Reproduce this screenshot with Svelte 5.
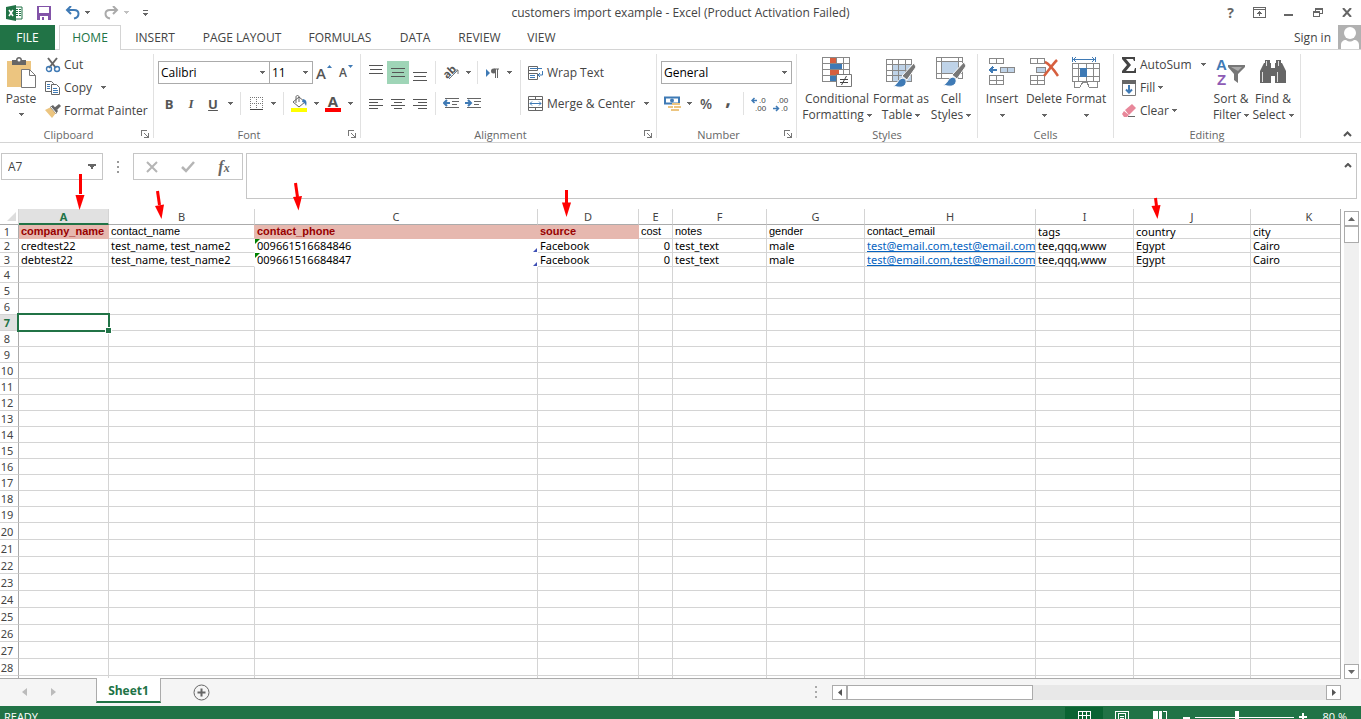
<script>
  const tabs = [
    { name: 'INSERT', width: 68 },
    { name: 'PAGE LAYOUT', width: 106 },
    { name: 'FORMULAS', width: 90 },
    { name: 'DATA', width: 60 },
    { name: 'REVIEW', width: 69 },
    { name: 'VIEW', width: 55 }
  ];

  const columns = [
    { name: 'A', width: 90 },
    { name: 'B', width: 146 },
    { name: 'C', width: 283 },
    { name: 'D', width: 101 },
    { name: 'E', width: 34 },
    { name: 'F', width: 94 },
    { name: 'G', width: 98 },
    { name: 'H', width: 171 },
    { name: 'I', width: 98 },
    { name: 'J', width: 117 },
    { name: 'K', width: 117 }
  ];

  const header = ['company_name', 'contact_name', 'contact_phone', 'source', 'cost', 'notes', 'gender', 'contact_email', 'tags', 'country', 'city'];
  const required = ['A', 'C', 'D'];
  const mails = 'test@email.com,test@email.com';

  const records = [
    ['credtest22', 'test_name, test_name2', '009661516684846', 'Facebook', '0', 'test_text', 'male', mails, 'tee,qqq,www', 'Egypt', 'Cairo'],
    ['debtest22', 'test_name, test_name2', '009661516684847', 'Facebook', '0', 'test_text', 'male', mails, 'tee,qqq,www', 'Egypt', 'Cairo']
  ];

  // rows 4 to 28 are empty
  const emptyRows = Array.from({ length: 25 }, (_, i) => i + 4);

  let selectedRow = $state(7);
  let zoom = $state(80);
</script>

{#snippet caret()}
  <svg class="caret" width="5" height="3" viewBox="0 0 5 3" shape-rendering="crispEdges"><path d="M0 0h5v1H4v1H3v1H2V2H1V1H0z" fill="#666" /></svg>
{/snippet}

{#snippet launcher(name)}
  <button class="launcher" aria-label="{name} settings">
    <svg width="8" height="8" viewBox="0 0 8 8" fill="none" stroke="#777" shape-rendering="crispEdges"><path d="M.5 6V.5H6M3 3l4 4M7.5 3v4.5H3" /></svg>
  </button>
{/snippet}

{#snippet lines(rows, y)}
  <svg width="14" height="16" viewBox="0 0 14 16" fill="none" stroke="#555" shape-rendering="crispEdges">
    {#each rows as [from, to], i}
      <path d="M{from} {y + i * 4 - (rows.length > 3 ? i : 0)}.5H{to}" />
    {/each}
  </svg>
{/snippet}

<div class="window">
  <header class="titlebar">
    <div class="quick">
      <svg width="17" height="16" viewBox="0 0 17 16">
        <path d="M9 2h7v12H9z" fill="#fff" stroke="#217346" />
        <path d="M10 4.5h2m1 0h2m-5 2h2m1 0h2m-5 2h2m1 0h2m-5 2h2m1 0h2" stroke="#217346" />
        <path d="M0 2l10-2v16L0 14z" fill="#217346" />
        <path d="M3 5l4 6M7 5l-4 6" stroke="#fff" stroke-width="1.6" />
      </svg>
      <button aria-label="Save">
        <svg width="14" height="14" viewBox="0 0 14 14" shape-rendering="crispEdges"><path d="M0 0h14v14H0z" fill="#8253a8" /><path d="M2 1h10v6H2zM3 10h8v4H3z" fill="#fff" /><path d="M5 11h2v3H5z" fill="#8253a8" /></svg>
      </button>
      <button class="undo" aria-label="Undo">
        <svg width="15" height="14" viewBox="0 0 15 14" fill="none" stroke="#3f7ab5" stroke-width="2"><path d="M2 4h7c6 0 6 7 0 8.500M6 0L2 4l4 4" /></svg>
        {@render caret()}
      </button>
      <button class="undo redo" aria-label="Redo">
        <svg width="15" height="14" viewBox="0 0 15 14" fill="none" stroke="#aaa" stroke-width="2"><path d="M13 4H6c-6 0-6 7 0 8.500M9 0l4 4-4 4" /></svg>
        {@render caret()}
      </button>
      <button aria-label="Customize Quick Access Toolbar">
        <svg width="5" height="6" viewBox="0 0 5 6" shape-rendering="crispEdges"><path d="M0 0h5v1H0zM0 3h5v1H4v1H3v1H2V5H1V4H0z" fill="#666" /></svg>
      </button>
    </div>
    <h1>customers import example - Excel (Product Activation Failed)</h1>
    <div class="controls">
      <button class="help" aria-label="Help">?</button>
      <button aria-label="Ribbon display options"><svg width="13" height="11" viewBox="0 0 13 11" fill="none" stroke="#666" shape-rendering="crispEdges"><path d="M.5.500h12v10H.5zM0 2.500h13M6.500 9V4M4 6.500h5M5 5.500h3" /></svg></button>
      <button aria-label="Minimize"><svg width="9" height="11" viewBox="0 0 9 11"><path d="M0 7h9v2H0z" fill="#666" /></svg></button>
      <button aria-label="Restore"><svg width="10" height="9" viewBox="0 0 10 9" fill="none" stroke="#666" shape-rendering="crispEdges"><path d="M2.500 3V.5h7v5H7M3 1.500h7M.5 3.500h6v5h-6zM0 4.500h7" /></svg></button>
      <button aria-label="Close"><svg width="10" height="9" viewBox="0 0 10 9" stroke="#666" stroke-width="2"><path d="M1 0l8 9M9 0L1 9" /></svg></button>
    </div>
  </header>

  <nav class="tabs">
    <button class="file">FILE</button>
    <button class="home">HOME</button>
    {#each tabs as tab}
      <button style:width="{tab.width}px">{tab.name}</button>
    {/each}
    <a class="signin" href="#signin">Sign in</a>
    <svg class="avatar" width="23" height="24" viewBox="0 0 23 24"><path d="M0 0h23v24H0z" fill="#b1b1b1" /><circle cx="12" cy="8" r="6" fill="#fff" /><path d="M3 24v-4c0-3 2-5 5-5 3 2 5 2 8 0 3 0 5 2 5 5v4z" fill="#fff" /></svg>
  </nav>

  <section class="ribbon">
    <div class="group clipboard">
      <div class="body">
        <button class="big paste">
          <svg width="30" height="31" viewBox="0 0 30 31"><path d="M1 4h24v26H1z" fill="#ecc580" /><path d="M6 3h4c0-4 6-4 6 0h4v5H6z" fill="#666" /><circle cx="13" cy="3" r="1.500" fill="#fff" /><path d="M15.500 12.500h8l6 6v12h-14z" fill="#fff" stroke="#777" /><path d="M23.500 12.500v6h6" fill="none" stroke="#777" /></svg>
          <span>Paste</span>
          {@render caret()}
        </button>
        <div class="stack">
          <button><svg width="16" height="16" viewBox="0 0 16 16" fill="none"><path d="M3 1l8 10M12 1L4 11" stroke="#666" stroke-width="2" /><circle cx="4" cy="12" r="2.500" stroke="#3f7ab5" stroke-width="1.400" /><circle cx="12" cy="12" r="2.500" stroke="#3f7ab5" stroke-width="1.400" /></svg>Cut</button>
          <button><svg width="16" height="16" viewBox="0 0 16 16" fill="#fff" stroke="#666"><path d="M.5 1.500h6l2 2v8h-8z" /><path d="M2 4.500h3m-3 2h3m-3 2h3" stroke="#3f7ab5" /><path d="M6.500 4.500h5l3 3v7h-8z" /><path d="M8 8.500h4m-4 2h5m-5 2h5" stroke="#3f7ab5" /></svg>Copy<i>{@render caret()}</i></button>
          <button><svg width="16" height="16" viewBox="0 0 16 16"><path d="M0 7l6-3 5 6-4 5z" fill="#ecc580" /><path d="M5 4l3-2 5 6-2 3z" fill="#666" /><path d="M9 5l5-4 2 2-4 4z" fill="#666" /><path d="M6 4l5 6" stroke="#fff" /></svg>Format Painter</button>
        </div>
      </div>
      <div class="caption"><span>Clipboard</span>{@render launcher('Clipboard')}</div>
    </div>

    <div class="group font">
      <div class="body rows">
        <div class="row">
          <span class="combo family"><select aria-label="Font"><option>Calibri</option></select>{@render caret()}</span>
          <span class="combo size"><select aria-label="Font size"><option>11</option></select>{@render caret()}</span>
          <button class="tool grow" aria-label="Increase font size">A<svg width="5" height="3" viewBox="0 0 5 3"><path d="M2.500 0L5 3H0z" fill="#3f7ab5" /></svg></button>
          <button class="tool grow shrink" aria-label="Decrease font size">A<svg width="5" height="3" viewBox="0 0 5 3"><path d="M0 0h5L2.500 3z" fill="#3f7ab5" /></svg></button>
        </div>
        <div class="row">
          <button class="tool"><b>B</b></button>
          <button class="tool italic"><b>I</b></button>
          <button class="tool underline"><b>U</b></button>
          <button class="drop" aria-label="Underline style">{@render caret()}</button>
          <span class="split"></span>
          <button class="tool" aria-label="Borders"><svg width="13" height="13" viewBox="0 0 13 13" stroke="#777" shape-rendering="crispEdges"><path d="M0 .5h13M0 6.500h13M.5 0v12M6.500 0v12M12.500 0v12" stroke-dasharray="1 1" /><path d="M0 12.500h13" stroke="#444" /></svg></button>
          <button class="drop" aria-label="Border style">{@render caret()}</button>
          <span class="split"></span>
          <button class="tool" aria-label="Fill color"><svg width="17" height="17" viewBox="0 0 17 17"><path d="M2 7l6-5 6 5-6 5z" fill="#fff" stroke="#666" /><path d="M5 8V2c0-2 3-2 3 0v5" fill="none" stroke="#666" /><path d="M12 4c4 1 4 4 3 7-1-2-2-4-4-4z" fill="#3f7ab5" /><path d="M0 13h16v4H0z" fill="#ff0" /></svg></button>
          <button class="drop" aria-label="Fill color list">{@render caret()}</button>
          <button class="tool fontcolor" aria-label="Font color"><b>A</b></button>
          <button class="drop" aria-label="Font color list">{@render caret()}</button>
        </div>
      </div>
      <div class="caption"><span>Font</span>{@render launcher('Font')}</div>
    </div>

    <div class="group alignment">
      <div class="body">
        <div class="rows">
          <div class="row">
            <button class="tool" aria-label="Top align">{@render lines([[0, 14], [1, 13], [0, 14]], 0)}</button>
            <button class="tool on" aria-label="Middle align">{@render lines([[0, 14], [1, 13], [0, 14]], 3)}</button>
            <button class="tool" aria-label="Bottom align">{@render lines([[0, 14], [1, 13], [0, 14]], 7)}</button>
            <span class="split"></span>
            <button class="tool orient" aria-label="Orientation"><svg width="18" height="17" viewBox="0 0 18 17"><text x="1" y="13" transform="rotate(-45 6 9)" font-size="11" font-weight="bold" fill="#555">ab</text><path d="M7 15l9-9M12 6h4v4" fill="none" stroke="#777" /></svg></button>
            <button class="drop" aria-label="Orientation list">{@render caret()}</button>
            <span class="split narrow"></span>
            <button class="tool" aria-label="Text direction"><svg width="13" height="10" viewBox="0 0 13 10"><path d="M0 1l4 4-4 4z" fill="#3f7ab5" /><path d="M8 1h5M9.500 1v9M11.500 1v9" stroke="#666" /><circle cx="7.500" cy="3" r="2.500" fill="#666" /></svg></button>
            <button class="drop" aria-label="Text direction list">{@render caret()}</button>
          </div>
          <div class="row">
            <button class="tool" aria-label="Align left">{@render lines([[0, 14], [0, 9], [0, 14], [0, 9]], 3)}</button>
            <button class="tool" aria-label="Center">{@render lines([[0, 14], [3, 11], [0, 14], [3, 11]], 3)}</button>
            <button class="tool" aria-label="Align right">{@render lines([[0, 14], [5, 14], [0, 14], [5, 14]], 3)}</button>
            <span class="split"></span>
            <button class="tool" aria-label="Decrease indent"><svg width="16" height="11" viewBox="0 0 16 11" fill="none"><path d="M2 .5h14M9 3.500h7M9 6.500h5M2 9.500h14" stroke="#666" shape-rendering="crispEdges" /><path d="M1 5h6M4 2L1 5l3 3" stroke="#3f7ab5" stroke-width="2" /></svg></button>
            <button class="tool" aria-label="Increase indent"><svg width="16" height="11" viewBox="0 0 16 11" fill="none"><path d="M2 .5h14M9 3.500h7M9 6.500h5M2 9.500h14" stroke="#666" shape-rendering="crispEdges" /><path d="M0 5h6M3 2l3 3-3 3" stroke="#3f7ab5" stroke-width="2" /></svg></button>
          </div>
        </div>
        <span class="split tall"></span>
        <div class="rows wrap">
          <button><svg width="16" height="16" viewBox="0 0 16 16" fill="none" stroke="#666"><path d="M.5 1.500h9v4h-9zM.5 8.500h9v6h-9zM.5 5v4" /><path d="M2 3.500h12M2 10.500h5M2 12.500h5M14.500 6v4h-5M12 8l-2 2 2 2" stroke="#3f7ab5" /></svg>Wrap Text</button>
          <button><svg width="16" height="16" viewBox="0 0 16 16" fill="none" stroke="#666"><path d="M.5.500h14v14H.5zM.5 3.500h14M.5 11.500h14M7.500 0v4M7.500 11v4" /><path d="M2 7.500h11M4 5.500l-2 2 2 2M11 5.500l2 2-2 2" stroke="#3f7ab5" /></svg>Merge &amp; Center<i>{@render caret()}</i></button>
        </div>
      </div>
      <div class="caption"><span>Alignment</span>{@render launcher('Alignment')}</div>
    </div>

    <div class="group number">
      <div class="body rows">
        <div class="row"><span class="combo format"><select aria-label="Number format"><option>General</option></select>{@render caret()}</span></div>
        <div class="row">
          <button class="tool" aria-label="Accounting format"><svg width="17" height="16" viewBox="0 0 17 16"><path d="M1 1.500h14v6H1z" fill="#fff" stroke="#3f7ab5" stroke-width="2" /><circle cx="8" cy="4.500" r="2" fill="#3f7ab5" /><path d="M8 7h8v2H8zM10 10h7v2h-7zM7 13h8v2H7zM4 10h5v2H4z" fill="#ecc580" /></svg></button>
          <button class="drop" aria-label="Currency list">{@render caret()}</button>
          <button class="tool percent">%</button>
          <button class="tool comma">,</button>
          <span class="split"></span>
          <button class="tool decimal" aria-label="Increase decimal"><svg width="16" height="16" viewBox="0 0 16 16"><path d="M1 4.500h5M3.500 2L1 4.500 3.500 7" fill="none" stroke="#3f7ab5" stroke-width="1.500" /><text x="8" y="7">.0</text><text x="4" y="15">.00</text></svg></button>
          <button class="tool decimal" aria-label="Decrease decimal"><svg width="16" height="16" viewBox="0 0 16 16"><path d="M0 12.500h5M3 10l2.500 2.500L3 15" fill="none" stroke="#3f7ab5" stroke-width="1.500" /><text x="4" y="7">.00</text><text x="8" y="15">.0</text></svg></button>
        </div>
      </div>
      <div class="caption"><span>Number</span>{@render launcher('Number')}</div>
    </div>

    <div class="group styles">
      <div class="body">
        <button class="big w68">
          <svg width="30" height="31" viewBox="0 0 30 31"><g fill="none" stroke="#888" shape-rendering="crispEdges"><path d="M.5.500h27v24H.5zM0 6.500h28M0 12.500h28M0 18.500h28M8.500 0v25M14.500 0v25M21.500 0v25" /></g><path d="M8 1h6v5H8zM8 13h9v5H8z" fill="#d65f3f" /><path d="M8 7h12v5H8zM8 19h6v5H8z" fill="#3f7ab5" /><path d="M14.500 17.500h15v12h-15z" fill="#fff" stroke="#777" /><path d="M18 22.500h8M18 25.500h8M24.500 19l-5 9" stroke="#444" /></svg>
          <span>Conditional</span><span>Formatting {@render caret()}</span>
        </button>
        <button class="big w60">
          <svg width="30" height="31" viewBox="0 0 30 31"><path d="M7 8h19v17H7z" fill="#bfd3e8" /><path d="M.5 2.500h25v22H.5zM0 7.500h26M0 13.500h26M0 18.500h26M6.500 2v23M12.500 2v23M19.500 2v23" fill="none" stroke="#888" shape-rendering="crispEdges" /><path d="M28 6l2 4-9 13-5-4z" fill="#777" stroke="#fff" /><path d="M7 29c5-1 4-7 10-8 4 1 4 6 1 8-3 2-7 1-11 0z" fill="#3f7ab5" stroke="#fff" /></svg>
          <span>Format as</span><span>Table {@render caret()}</span>
        </button>
        <button class="big w40">
          <svg width="30" height="31" viewBox="0 0 30 31"><path d="M6 5h17v11H6z" fill="#bfd3e8" /><path d="M.5.500h26v21H.5zM0 4.500h27M0 16.500h27M5.500 0v22M22.500 0v22" fill="none" stroke="#888" shape-rendering="crispEdges" /><path d="M28 5l2 4-9 13-5-4z" fill="#777" stroke="#fff" /><path d="M7 28c5-1 4-7 10-8 4 1 4 6 1 8-3 2-7 1-11 0z" fill="#3f7ab5" stroke="#fff" /></svg>
          <span>Cell</span><span>Styles {@render caret()}</span>
        </button>
      </div>
      <div class="caption"><span>Styles</span></div>
    </div>

    <div class="group cells">
      <div class="body">
        <button class="big w42">
          <svg width="28" height="31" viewBox="0 0 28 31" shape-rendering="crispEdges"><path d="M1.500 1.500h14v5h-14zM8.500 1v6M1.500 18.500h14v9h-14zM8.500 18v10M1 23.500h15" fill="none" stroke="#888" /><path d="M12.500 10.500h14v5h-14zM19.500 10v6" fill="#bfd3e8" stroke="#888" /><path d="M3 13h6M5 10l-3 3 3 3" fill="none" stroke="#3f7ab5" stroke-width="2" /></svg>
          <span>Insert</span><span>{@render caret()}</span>
        </button>
        <button class="big w42">
          <svg width="30" height="31" viewBox="0 0 30 31"><g shape-rendering="crispEdges"><path d="M1.500 1.500h14v5h-14zM8.500 1v6M1.500 18.500h14v9h-14zM8.500 18v10M1 23.500h15" fill="none" stroke="#888" /><path d="M7.500 10.500h9v5h-9z" fill="#bfd3e8" stroke="#888" /></g><path d="M16 5c5 2 9 8 13 14M28 3c-4 4-9 11-13 16" fill="none" stroke="#d65f3f" stroke-width="2.500" /></svg>
          <span>Delete</span><span>{@render caret()}</span>
        </button>
        <button class="big w42">
          <svg width="28" height="31" viewBox="0 0 28 31" shape-rendering="crispEdges"><path d="M.5 6.500h27v18H.5zM0 11.500h28M0 19.500h28M6.500 6v19M14.500 6v19M21.500 6v19M2 25v5h6l3-5h4l2 5h8v-5" fill="none" stroke="#888" /><path d="M8 11h7v9H8z" fill="#3f7ab5" /><path d="M.5 0v5M23.500 0v5M1 2.500h22M4 0L1.500 2.500 4 5M20 0l2.500 2.500L20 5" fill="none" stroke="#3f7ab5" /></svg>
          <span>Format</span><span>{@render caret()}</span>
        </button>
      </div>
      <div class="caption"><span>Cells</span></div>
    </div>

    <div class="group editing">
      <div class="body">
        <div class="stack">
          <button><svg width="16" height="16" viewBox="0 0 16 16"><path d="M1 0h13v4h-1l-1-2H5l5 6-5 6h8l1-3h1v5H1v-2l5-6-5-6z" fill="#444" /></svg>AutoSum<i>{@render caret()}</i></button>
          <button><svg width="16" height="16" viewBox="0 0 16 16"><path d="M1.500.500h13v15h-13z" fill="#fff" stroke="#777" /><path d="M1 0h14v4H1z" fill="#666" /><path d="M8 5v8M5 9.500l3 3 3-3" fill="none" stroke="#3f7ab5" stroke-width="2" /></svg>Fill{@render caret()}</button>
          <button><svg width="16" height="16" viewBox="0 0 16 16"><path d="M4 7l7-6 4 4-7 7z" fill="#e8879a" /><path d="M3 8l5 4-2 2H3l-2-3z" fill="#e8879a" /><path d="M7 13.500h7" stroke="#666" /></svg>Clear{@render caret()}</button>
        </div>
        <button class="big w42 sort">
          <svg width="30" height="31" viewBox="0 0 30 31"><text x="0" y="13" fill="#3f7ab5">A</text><text x="1" y="28" fill="#8e5bb5">Z</text><path d="M12 8h17v2l-7 7v9l-4-3v-6l-6-7z" fill="#777" /><path d="M15 10h11l-4 4z" fill="#aaa" /></svg>
          <span>Sort &amp;</span><span>Filter {@render caret()}</span>
        </button>
        <button class="big w42">
          <svg width="28" height="31" viewBox="0 0 28 31"><path d="M6 3h5v3h1v20H1V14l4-8h1zM17 3h5v3h1l4 8v12H16V6h1zM11 11h6v8h-6z" fill="#666" /><path d="M3.500 15v10M18.500 15v10M7.500 4v5M19.500 4v5" stroke="#ddd" /></svg>
          <span>Find &amp;</span><span>Select {@render caret()}</span>
        </button>
      </div>
      <div class="caption"><span>Editing</span></div>
    </div>
    <button class="collapse" aria-label="Collapse the ribbon"><svg width="9" height="6" viewBox="0 0 9 6"><path d="M1 5l3.500-3.500L8 5" fill="none" stroke="#555" stroke-width="2" /></svg></button>
  </section>

  <section class="formula">
    <label class="namebox"><input value="A7" aria-label="Name box" />{@render caret()}</label>
    <svg width="2" height="12" viewBox="0 0 2 12" shape-rendering="crispEdges"><path d="M0 0h2v2H0zM0 5h2v2H0zM0 10h2v2H0z" fill="#999" /></svg>
    <div class="entry">
      <button aria-label="Cancel"><svg width="12" height="12" viewBox="0 0 12 12" stroke="#b5b5b5" stroke-width="2"><path d="M1 1l10 10M11 1L1 11" /></svg></button>
      <button aria-label="Enter"><svg width="14" height="12" viewBox="0 0 14 12"><path d="M1 6l4 4 8-9" fill="none" stroke="#b5b5b5" stroke-width="2.500" /></svg></button>
      <button class="fx" aria-label="Insert function">f<small>x</small></button>
    </div>
    <div class="bar">
      <textarea aria-label="Formula bar"></textarea>
      <svg width="8" height="5" viewBox="0 0 8 5"><path d="M1 4l3-3 3 3" fill="none" stroke="#555" stroke-width="2" /></svg>
    </div>
  </section>

  <main class="workspace">
    <div class="sheet">
      <table>
        <colgroup>
          <col style:width="19px" />
          {#each columns as column}<col style:width="{column.width}px" />{/each}
        </colgroup>
        <thead>
          <tr>
            <th class="corner"><svg width="9" height="9" viewBox="0 0 9 9"><path d="M9 0v9H0z" fill="#ddd" /></svg></th>
            {#each columns as column}<th class:active={column.name === 'A'}>{column.name}</th>{/each}
          </tr>
        </thead>
        <tbody>
          <tr class="data titles">
            <th>1</th>
            {#each header as title, i}
              <td class:required={required.includes(columns[i].name)} class:before={i === 1} class:plain={i > 7}><div>{title}</div></td>
            {/each}
          </tr>
          {#each records as record, n}
            <tr class="data">
              <th>{n + 2}</th>
              {#each record as value, i}
                <td class:phone={i === 2} class:noline={i === 1} class:num={i === 4}>
                  <div>{#if i === 7}<a href="mailto:{value}">{value}</a>{:else}{value}{/if}</div>
                </td>
              {/each}
            </tr>
          {/each}
          {#each emptyRows as row}
            <tr class:tall={row > 19}>
              <th class:active={row === selectedRow}>{row}</th>
              {#each columns as column, i}
                <td onclick={() => (selectedRow = row)}>{#if row === selectedRow && i === 0}<span class="selection"></span>{/if}</td>
              {/each}
            </tr>
          {/each}
          <tr class="rest"><th></th>{#each columns as column}<td></td>{/each}</tr>
        </tbody>
      </table>
    </div>
    <div class="vscroll">
      <button aria-label="Scroll up"><svg width="7" height="4" viewBox="0 0 7 4"><path d="M0 4l3.500-4L7 4z" fill="#666" /></svg></button>
      <span class="thumb"></span>
      <span class="track"></span>
      <button aria-label="Scroll down"><svg width="7" height="4" viewBox="0 0 7 4"><path d="M0 0h7L3.500 4z" fill="#666" /></svg></button>
    </div>
  </main>

  <footer class="sheets">
    <div class="step">
      <button aria-label="Previous sheet"><svg width="5" height="8" viewBox="0 0 5 8"><path d="M5 0v8L0 4z" fill="#bbb" /></svg></button>
      <button aria-label="Next sheet"><svg width="5" height="8" viewBox="0 0 5 8"><path d="M0 0v8l5-4z" fill="#bbb" /></svg></button>
    </div>
    <button class="sheettab">Sheet1</button>
    <button class="add" aria-label="New sheet"><svg width="17" height="17" viewBox="0 0 17 17" fill="none" stroke="#666"><circle cx="8.500" cy="8.500" r="7.500" /><path d="M8.500 4.500v8M4.500 8.500h8" stroke-width="2" /></svg></button>
    <svg class="grip" width="2" height="12" viewBox="0 0 2 12"><path d="M0 0h2v2H0zM0 5h2v2H0zM0 10h2v2H0z" fill="#aaa" /></svg>
    <div class="hscroll">
      <button aria-label="Scroll left"><svg width="4" height="7" viewBox="0 0 4 7"><path d="M4 0v7L0 3.500z" fill="#555" /></svg></button>
      <span class="thumb"></span>
      <span class="track"></span>
      <button aria-label="Scroll right"><svg width="4" height="7" viewBox="0 0 4 7"><path d="M0 0v7l4-3.500z" fill="#555" /></svg></button>
    </div>
  </footer>

  <footer class="status">
    <span class="ready">READY</span>
    <button class="view on" aria-label="Normal view"><svg width="13" height="13" viewBox="0 0 13 13" fill="none" stroke="#fff" shape-rendering="crispEdges"><path d="M.5.500h12v12H.5zM0 4.500h13M0 8.500h13M4.500 0v13M8.500 0v13" /></svg></button>
    <button class="view" aria-label="Page layout view"><svg width="14" height="13" viewBox="0 0 14 13" fill="none" stroke="#fff" shape-rendering="crispEdges"><path d="M.5.500h13v12H.5zM3.500 13V2.500h7V13M5 5.500h4M5 7.500h4M5 9.500h4" /></svg></button>
    <button class="view" aria-label="Page break preview"><svg width="14" height="13" viewBox="0 0 14 13" fill="#fff" shape-rendering="crispEdges"><path d="M0 0h5v9H0zM6 0h3v9H6zM10 0h4v13h-1V1h-3zM0 11h9v2H0z" /></svg></button>
    <div class="zoom">
      <button aria-label="Zoom out"><svg width="7" height="7" viewBox="0 0 7 7"><path d="M0 3h7v2H0z" fill="#fff" /></svg></button>
      <input type="range" min="10" max="180" aria-label="Zoom" bind:value={zoom} />
      <button aria-label="Zoom in"><svg width="8" height="8" viewBox="0 0 8 8"><path d="M3 0h2v3h3v2H5v3H3V5H0V3h3z" fill="#fff" /></svg></button>
      <output>{zoom} %</output>
    </div>
  </footer>

  <!-- red pointers to the columns that get imported -->
  <svg class="pointers" width="1200" height="230" viewBox="0 0 1200 230" fill="#f00" stroke="#f00">
    <path d="M80.500 174v20" stroke-width="3" /><path d="M75.500 195h9L79.500 210z" stroke="none" />
    <path d="M157.500 191l2 14" stroke-width="3" /><path d="M155 206l9-1.500-2.500 14.500z" stroke="none" />
    <path d="M295.500 183l2 14" stroke-width="3" /><path d="M293 197l9-1-3.500 14.500z" stroke="none" />
    <path d="M566.500 190v14" stroke-width="3" /><path d="M562 202.500h9L566.500 217z" stroke="none" />
    <path d="M1155.500 198l1 8" stroke-width="3" /><path d="M1151.500 206l9-1-3 14z" stroke="none" />
  </svg>
</div>

<style>
  :global(body){
    overflow: hidden;
  }

  .window{
    position: relative;
    min-height: 100vh;
    display: flex;
    flex-direction: column;
    background: white;
    color: #444;
    font-family: "Open Sans", "Noto Sans", sans-serif;
    font-size: 12px;
    line-height: 16px;
  }

  button{
    display: flex;
    align-items: center;
    justify-content: center;
    padding: 0;
    border: 0;
    background: none;
    color: inherit;
    font: inherit;
    white-space: nowrap;
  }

  svg{
    flex: none;
    display: block;
  }

  input, select, textarea{
    box-sizing: border-box;
    margin: 0;
    border: 0;
    background: none;
    color: inherit;
    font: inherit;
    outline: none;
    appearance: none;
  }

  .titlebar{
    display: grid;
    grid-template-columns: 1fr auto 1fr;
    align-items: center;
    height: 25px;
  }

  .quick{
    display: flex;
    align-items: center;
    gap: 14px;
    padding-left: 6px;
    height: 22px;
  }

  .undo{
    gap: 5px;
  }

  .redo .caret{
    opacity: .4;
  }

  h1{
    margin: 0;
    font-size: 12px;
    font-weight: normal;
  }

  .controls{
    display: flex;
    justify-content: flex-end;
  }

  .controls button{
    width: 29px;
    height: 22px;
  }

  .controls .help{
    font-size: 14px;
    font-weight: bold;
    color: #666;
  }

  .tabs{
    display: flex;
    height: 24px;
    border-bottom: 1px solid #d4d4d4;
  }

  .tabs button{
    height: 25px;
  }

  .tabs .file{
    width: 55px;
    margin-right: 4px;
    background: #217346;
    color: white;
  }

  .tabs .home{
    box-sizing: border-box;
    width: 62px;
    border: 1px solid #d4d4d4;
    border-bottom: 0;
    background: white;
    color: #217346;
  }

  .signin{
    margin-left: auto;
    padding-right: 7px;
    line-height: 25px;
    color: inherit;
    text-decoration: none;
  }

  .ribbon{
    display: flex;
    height: 92px;
    border-bottom: 1px solid #d4d4d4;
  }

  .group{
    display: flex;
    flex-direction: column;
    box-sizing: border-box;
    margin: 4px 0;
    border-right: 1px solid #e1e1e1;
  }

  .body{
    display: flex;
    box-sizing: border-box;
    height: 72px;
  }

  .caption{
    display: flex;
    height: 16px;
    color: #666;
    text-align: center;
    font-size: 11px;
  }

  .caption span{
    flex: 1;
    padding-top: 1px;
    line-height: 15px;
  }

  .group .body{
    flex: none;
  }

  .caption{
    margin-top: auto;
    margin-bottom: -4px;
  }

  .launcher{
    width: 16px;
  }

  .clipboard{ width: 154px; }
  .font{ width: 207px; }
  .alignment{ width: 296px; }
  .number{ width: 140px; }
  .styles{ width: 181px; }
  .cells{ width: 136px; }
  .editing{ width: 187px; }

  .big{
    flex-direction: column;
    justify-content: flex-start;
    padding-top: 3px;
  }

  .big span{
    display: flex;
    align-items: center;
    gap: 3px;
    height: 16px;
  }

  .big > svg:first-child{
    margin-bottom: 3px;
  }

  .paste{
    width: 42px;
  }

  .paste .caret{
    margin-top: 6px;
  }

  .w68{ width: 68px; }
  .w60{ width: 60px; }
  .w40{ width: 40px; }
  .w42{ width: 42px; }

  .styles .body{
    padding-left: 6px;
  }

  .cells .body{
    padding-left: 3px;
  }

  .stack{
    display: flex;
    flex-direction: column;
    margin-top: -1px;
    padding-left: 3px;
  }

  .stack button, .wrap button{
    justify-content: flex-start;
    gap: 3px;
    height: 23px;
  }

  .stack i, .wrap i{
    padding-left: 6px;
  }

  .editing .stack{
    width: 89px;
    padding-left: 7px;
  }

  .sort text{
    font: bold 15px "Liberation Sans", sans-serif;
  }

  .orient svg{
    overflow: visible;
  }

  .decimal text{
    fill: #444;
    font: 8px "Liberation Sans", sans-serif;
  }

  .rows{
    display: flex;
    flex-direction: column;
    gap: 8px;
    padding-top: 7px;
  }

  .body.rows{
    padding-left: 4px;
  }

  .alignment .body{
    padding-left: 4px;
  }

  .row{
    display: flex;
    height: 23px;
  }

  .tool{
    width: 22px;
    color: #555;
  }

  .tool b{
    font-size: 13px;
  }

  .italic{
    font-style: italic;
    font-family: "Liberation Serif", serif;
  }

  .underline{
    text-decoration: underline;
  }

  .on{
    background: #9fd5b7;
  }

  .drop{
    width: 12px;
  }

  .split{
    width: 1px;
    margin: 0 4px;
    background: #e1e1e1;
  }

  .split.narrow{
    margin: 0 3px;
  }

  .split.tall{
    height: 55px;
    margin: 6px 7px 0 5px;
  }

  .combo{
    position: relative;
    box-sizing: border-box;
    border: 1px solid #ababab;
    color: black;
  }

  .combo select{
    width: 100%;
    height: 100%;
    padding: 0 2px;
  }

  .combo .caret{
    position: absolute;
    right: 4px;
    top: 9px;
  }

  .family{ width: 112px; }
  .size{ width: 44px; margin-left: -1px; }
  .format{ width: 131px; }

  .grow{
    gap: 1px;
    font-size: 15px;
    font-weight: 600;
  }

  .grow svg{
    margin-bottom: 12px;
  }

  .shrink{
    font-size: 12px;
  }

  .fontcolor b{
    width: 16px;
    line-height: 13px;
    border-bottom: 4px solid red;
    font-size: 15px;
  }

  .percent{
    font-size: 14px;
    font-weight: 600;
  }

  .comma{
    font-size: 20px;
    font-weight: bold;
    padding-bottom: 12px;
  }

  .collapse{
    width: 28px;
    height: 16px;
    margin: 76px 0 0 auto;
  }

  .formula{
    display: flex;
    align-items: flex-start;
    padding: 10px 4px 10px 1px;
  }

  .namebox, .entry, .bar{
    box-sizing: border-box;
    border: 1px solid #c6c6c6;
  }

  .namebox{
    display: flex;
    align-items: center;
    width: 102px;
    height: 27px;
    padding-right: 6px;
  }

  .namebox input{
    flex: 1;
    min-width: 0;
    padding-left: 6px;
  }

  .namebox .caret{
    width: 8px;
    height: 5px;
  }

  .formula > svg{
    margin: 8px 14px 0;
  }

  .entry{
    display: flex;
    width: 110px;
    height: 27px;
    margin-right: 3px;
  }

  .entry button{
    flex: 1;
  }

  .entry .fx{
    font: italic bold 16px "Liberation Serif", serif;
    color: #666;
  }

  .fx small{
    padding-top: 4px;
    font-size: 12px;
  }

  .bar{
    display: flex;
    flex: 1;
    height: 46px;
  }

  .bar textarea{
    flex: 1;
    resize: none;
  }

  .bar svg{
    margin: 9px 4px;
  }

  .workspace{
    display: flex;
  }

  .sheet{
    flex: 1;
    min-width: 0;
    overflow: hidden;
    border-right: 1px solid #ababab;
    border-bottom: 1px solid #ababab;
  }

  table{
    width: 1368px;
    table-layout: fixed;
    border-collapse: separate;
    border-spacing: 0;
    font-family: "Noto Sans", "Open Sans", sans-serif;
    font-size: 11px;
    line-height: 13px;
  }

  th, td{
    position: relative;
    box-sizing: border-box;
    height: 16px;
    padding: 0;
    border-right: 1px solid #d4d4d4;
    border-bottom: 1px solid #d4d4d4;
    color: black;
  }

  th{
    font-weight: normal;
    color: #444;
  }

  thead th{
    border-bottom-color: #ababab;
  }

  tbody th{
    padding-right: 4px;
    border-right-color: #ababab;
    text-align: center;
  }

  .corner svg{
    margin-left: 7px;
  }

  th.active{
    background: #e1e1e1;
    color: #217346;
    font-weight: bold;
  }

  thead th.active{
    border-bottom: 2px solid #217346;
  }

  .data th, .data td{
    height: 14px;
  }

  td div{
    overflow-x: clip;
    padding: 0 2px;
    white-space: nowrap;
  }

  .titles td{
    font-family: "Liberation Sans", sans-serif;
  }

  .titles .plain{
    font-family: inherit;
  }

  .titles .required{
    border-color: #e6b8af;
    background: #e6b8af;
    color: #980000;
    font-weight: bold;
  }

  .titles .before{
    border-right-color: #e6b8af;
  }

  .noline{
    border-right-color: white;
  }

  .phone{
    border-color: white;
  }

  .phone::before, .phone::after{
    content: "";
    position: absolute;
    border: solid transparent;
  }

  .phone::before{
    top: 0;
    left: 0;
    border-width: 5px 5px 0 0;
    border-top-color: green;
  }

  .phone::after{
    right: 0;
    bottom: 0;
    border-width: 0 0 4px 4px;
    border-bottom-color: #3f51b5;
  }

  .num{
    text-align: right;
  }

  td a{
    color: #0563c1;
  }

  .tall th, .tall td{
    height: 17px;
  }

  .rest th, .rest td{
    height: 2px;
    border-bottom: 0;
  }

  .selection{
    position: absolute;
    inset: -2px;
    z-index: 1;
    border: 2px solid #217346;
  }

  .selection::after{
    content: "";
    position: absolute;
    right: -4px;
    bottom: -4px;
    width: 5px;
    height: 5px;
    border: 1px solid white;
    background: #217346;
  }

  .vscroll{
    display: flex;
    flex-direction: column;
    width: 15px;
    margin: 2px 2px 0 3px;
  }

  .vscroll button, .hscroll button, .thumb{
    box-sizing: border-box;
    border: 1px solid #ababab;
    background: white;
  }

  .vscroll button{
    height: 15px;
  }

  .vscroll .thumb{
    height: 17px;
  }

  .track{
    flex: 1;
    background: #f0f0f0;
  }

  .sheets{
    display: flex;
    align-items: flex-start;
    height: 27px;
    background: #f5f5f5;
  }

  .step{
    display: flex;
    align-items: center;
    width: 96px;
    height: 26px;
    gap: 24px;
  }

  .step button:first-child{
    margin-left: 22px;
  }

  .sheettab{
    box-sizing: border-box;
    width: 65px;
    height: 25px;
    margin-top: -1px;
    padding-top: 3px;
    border: 1px solid #ababab;
    border-top: 0;
    border-bottom: 2px solid #217346;
    background: white;
    color: #217346;
    font-weight: bold;
  }

  .add{
    margin: 5px auto 0 32px;
  }

  .grip{
    margin: 7px 15px 0;
  }

  .hscroll{
    display: flex;
    width: 509px;
    height: 15px;
    margin: 6px 20px 0 0;
  }

  .hscroll button{
    width: 15px;
  }

  .hscroll .thumb{
    width: 186px;
  }

  .hscroll .track{
    background: #e8e8e8;
  }

  .status{
    display: flex;
    align-items: center;
    height: 22px;
    background: #217346;
    color: white;
    font-size: 11px;
  }

  .ready{
    margin-right: auto;
    padding-left: 4px;
  }

  .view{
    width: 38px;
    height: 20px;
  }

  .view.on{
    background: #0a6332;
  }

  .zoom{
    display: flex;
    align-items: center;
    gap: 5px;
    padding: 0 14px 0 4px;
  }

  .zoom input{
    width: 99px;
    height: 12px;
    background: linear-gradient(white, white) center / 100% 1px no-repeat;
  }

  .zoom input::-webkit-slider-thumb{
    appearance: none;
    width: 4px;
    height: 12px;
    background: white;
  }

  .zoom output{
    padding-left: 10px;
  }

  .pointers{
    position: absolute;
    top: 0;
    left: 0;
    z-index: 2;
    pointer-events: none;
  }
</style>
